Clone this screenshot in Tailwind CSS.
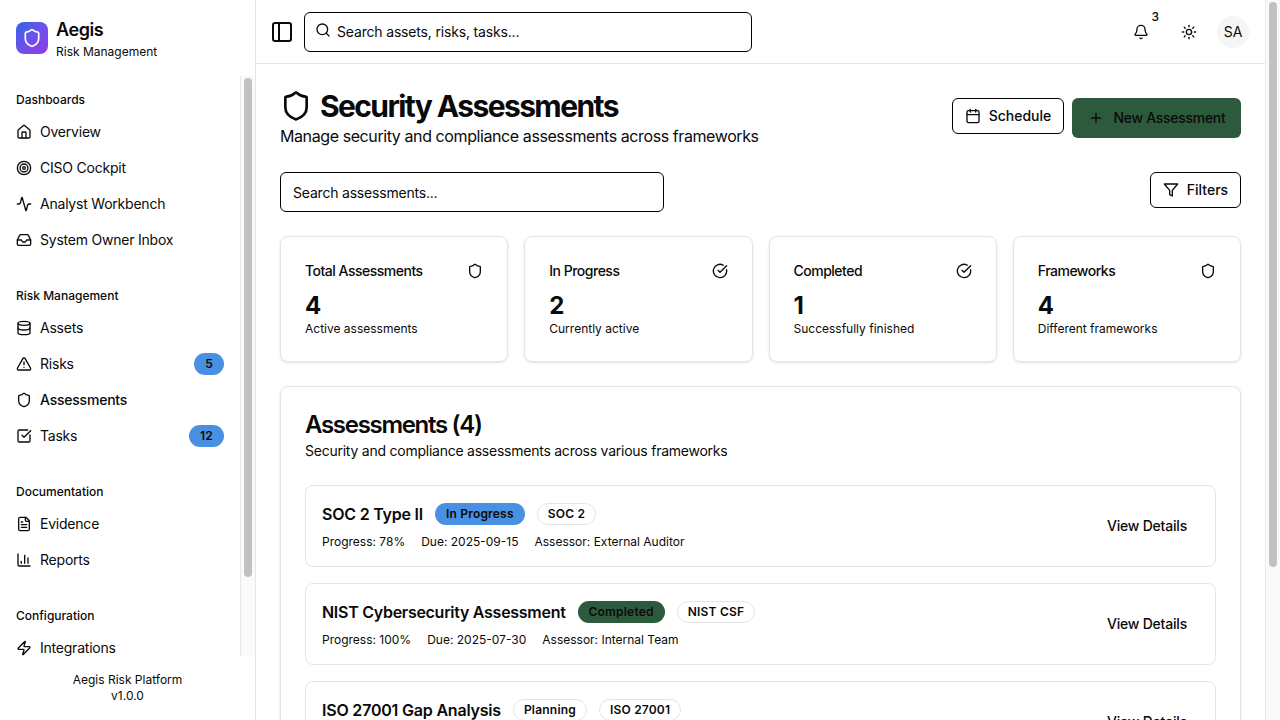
<!DOCTYPE html>
<html lang="en">
<head>
    <meta charset="UTF-8">
    <meta name="viewport" content="width=device-width, initial-scale=1.0">
    <title>Aegis - Security Assessments</title>
    <script src="https://cdn.jsdelivr.net/npm/@tailwindcss/browser@4"></script>
</head>
<body class="h-screen overflow-hidden bg-white text-[#0a0a0a] font-['Inter',sans-serif] flex">
    <!-- Sidebar -->
    <aside class="w-[256px] h-screen shrink-0 border-r border-[#e5e5e5] flex flex-col">
        <div class="h-[76px] shrink-0 pt-[22px] px-4 flex gap-2">
            <div class="w-8 h-8 rounded-lg bg-gradient-to-br from-[#2563eb] to-[#9333ea] flex items-center justify-center">
                <svg class="w-5 h-5" viewBox="0 0 24 24" fill="none" stroke="white" stroke-width="2" stroke-linecap="round" stroke-linejoin="round"><path d="M20 13c0 5-3.5 7.5-7.66 8.95a1 1 0 0 1-.67-.01C7.5 20.5 4 18 4 13V6a1 1 0 0 1 1-1c2 0 4.5-1.2 6.24-2.72a1.17 1.17 0 0 1 1.52 0C14.51 3.81 17 5 19 5a1 1 0 0 1 1 1z"/></svg>
            </div>
            <div class="-mt-[6px]">
                <div class="text-lg leading-7 font-semibold tracking-[-0.4px]">Aegis</div>
                <div class="text-xs leading-4">Risk Management</div>
            </div>
        </div>
        <div class="flex-1 min-h-0 flex">
            <nav class="flex-1 overflow-hidden px-4 pt-[8px] tracking-[-0.22px]">
                <div class="h-[30px] pt-[1px] flex items-center text-xs font-medium tracking-normal">Dashboards</div>
                <a class="h-9 flex items-center gap-2 text-sm">
                    <svg class="w-4 h-4" viewBox="0 0 24 24" fill="none" stroke="currentColor" stroke-width="2" stroke-linecap="round" stroke-linejoin="round"><path d="M15 21v-8a1 1 0 0 0-1-1h-4a1 1 0 0 0-1 1v8"/><path d="M3 10a2 2 0 0 1 .709-1.528l7-5.999a2 2 0 0 1 2.582 0l7 5.999A2 2 0 0 1 21 10v9a2 2 0 0 1-2 2H5a2 2 0 0 1-2-2z"/></svg>
                    Overview
                </a>
                <a class="h-9 flex items-center gap-2 text-sm">
                    <svg class="w-4 h-4" viewBox="0 0 24 24" fill="none" stroke="currentColor" stroke-width="2" stroke-linecap="round" stroke-linejoin="round"><circle cx="12" cy="12" r="10"/><circle cx="12" cy="12" r="6"/><circle cx="12" cy="12" r="2"/></svg>
                    CISO Cockpit
                </a>
                <a class="h-9 flex items-center gap-2 text-sm">
                    <svg class="w-4 h-4" viewBox="0 0 24 24" fill="none" stroke="currentColor" stroke-width="2" stroke-linecap="round" stroke-linejoin="round"><path d="M22 12h-2.48a2 2 0 0 0-1.93 1.46l-2.35 8.36a.25.25 0 0 1-.48 0L9.24 2.18a.25.25 0 0 0-.48 0l-2.35 8.36A2 2 0 0 1 4.49 12H2"/></svg>
                    Analyst Workbench
                </a>
                <a class="h-9 flex items-center gap-2 text-sm">
                    <svg class="w-4 h-4" viewBox="0 0 24 24" fill="none" stroke="currentColor" stroke-width="2" stroke-linecap="round" stroke-linejoin="round"><polyline points="22 12 16 12 14 15 10 15 8 12 2 12"/><path d="M5.45 5.11 2 12v6a2 2 0 0 0 2 2h16a2 2 0 0 0 2-2v-6l-3.45-6.89A2 2 0 0 0 16.76 4H7.24a2 2 0 0 0-1.79 1.11z"/></svg>
                    System Owner Inbox
                </a>

                <div class="h-[30px] pt-[1px] mt-[22px] flex items-center text-xs font-medium tracking-normal">Risk Management</div>
                <a class="h-9 flex items-center gap-2 text-sm">
                    <svg class="w-4 h-4" viewBox="0 0 24 24" fill="none" stroke="currentColor" stroke-width="2" stroke-linecap="round" stroke-linejoin="round"><ellipse cx="12" cy="5" rx="9" ry="3"/><path d="M3 5V19A9 3 0 0 0 21 19V5"/><path d="M3 12A9 3 0 0 0 21 12"/></svg>
                    Assets
                </a>
                <a class="h-9 flex items-center gap-2 text-sm">
                    <svg class="w-4 h-4" viewBox="0 0 24 24" fill="none" stroke="currentColor" stroke-width="2" stroke-linecap="round" stroke-linejoin="round"><path d="m21.73 18-8-14a2 2 0 0 0-3.48 0l-8 14A2 2 0 0 0 4 21h16a2 2 0 0 0 1.73-3"/><path d="M12 9v4"/><path d="M12 17h.01"/></svg>
                    Risks
                    <span class="ml-auto h-[22px] px-[11px] rounded-full bg-[#4a90e2] text-xs font-semibold tracking-[0.2px] flex items-center">5</span>
                </a>
                <a class="h-9 flex items-center gap-2 text-sm font-medium">
                    <svg class="w-4 h-4" viewBox="0 0 24 24" fill="none" stroke="currentColor" stroke-width="2" stroke-linecap="round" stroke-linejoin="round"><path d="M20 13c0 5-3.5 7.5-7.66 8.95a1 1 0 0 1-.67-.01C7.5 20.5 4 18 4 13V6a1 1 0 0 1 1-1c2 0 4.5-1.2 6.24-2.72a1.17 1.17 0 0 1 1.52 0C14.51 3.81 17 5 19 5a1 1 0 0 1 1 1z"/></svg>
                    Assessments
                </a>
                <a class="h-9 flex items-center gap-2 text-sm">
                    <svg class="w-4 h-4" viewBox="0 0 24 24" fill="none" stroke="currentColor" stroke-width="2" stroke-linecap="round" stroke-linejoin="round"><path d="M21 10.5V19a2 2 0 0 1-2 2H5a2 2 0 0 1-2-2V5a2 2 0 0 1 2-2h12.5"/><path d="m9 11 3 3L22 4"/></svg>
                    Tasks
                    <span class="ml-auto h-[22px] px-[11px] rounded-full bg-[#4a90e2] text-xs font-semibold tracking-[0.2px] flex items-center">12</span>
                </a>

                <div class="h-[30px] pt-[1px] mt-[22px] flex items-center text-xs font-medium tracking-normal">Documentation</div>
                <a class="h-9 flex items-center gap-2 text-sm">
                    <svg class="w-4 h-4" viewBox="0 0 24 24" fill="none" stroke="currentColor" stroke-width="2" stroke-linecap="round" stroke-linejoin="round"><path d="M15 2H6a2 2 0 0 0-2 2v16a2 2 0 0 0 2 2h12a2 2 0 0 0 2-2V7Z"/><path d="M14 2v4a2 2 0 0 0 2 2h4"/><path d="M10 9H8"/><path d="M16 13H8"/><path d="M16 17H8"/></svg>
                    Evidence
                </a>
                <a class="h-9 flex items-center gap-2 text-sm">
                    <svg class="w-4 h-4" viewBox="0 0 24 24" fill="none" stroke="currentColor" stroke-width="2" stroke-linecap="round" stroke-linejoin="round"><path d="M3 3v16a2 2 0 0 0 2 2h16"/><path d="M18 17V9"/><path d="M13 17V5"/><path d="M8 17v-3"/></svg>
                    Reports
                </a>

                <div class="h-[30px] pt-[1px] mt-[22px] flex items-center text-xs font-medium tracking-normal">Configuration</div>
                <a class="h-9 flex items-center gap-2 text-sm">
                    <svg class="w-4 h-4" viewBox="0 0 24 24" fill="none" stroke="currentColor" stroke-width="2" stroke-linecap="round" stroke-linejoin="round"><path d="M4 14a1 1 0 0 1-.78-1.63l9.9-10.2a.5.5 0 0 1 .86.46l-1.92 6.02A1 1 0 0 0 13 10h7a1 1 0 0 1 .78 1.63l-9.9 10.2a.5.5 0 0 1-.86-.46l1.92-6.02A1 1 0 0 0 11 14z"/></svg>
                    Integrations
                </a>
            </nav>
            <div class="w-[15px] shrink-0 bg-[#fafafa] border-l border-[#e8e8e8] pt-[2px] pl-[3px]">
                <div class="w-[8px] h-[499px] rounded-full bg-[#c1c1c1]"></div>
            </div>
        </div>
        <div class="h-16 shrink-0 pt-4 text-center text-xs leading-4">
            <div>Aegis Risk Platform</div>
            <div>v1.0.0</div>
        </div>
    </aside>

    <!-- Main column -->
    <div class="flex-1 min-w-0 h-screen overflow-hidden">
        <header class="h-16 border-b border-[#e5e5e5] flex items-center pl-[14px] pr-4">
            <svg class="w-6 h-6 shrink-0" viewBox="0 0 24 24" fill="none" stroke="currentColor" stroke-width="2" stroke-linecap="round" stroke-linejoin="round"><rect width="18" height="18" x="3" y="3" rx="2"/><path d="M9 3v18"/></svg>
            <div class="ml-[10px] w-[448px] h-10 rounded-md border border-black flex items-center pl-[10px] gap-[6px] text-sm tracking-[-0.17px]">
                <svg class="w-4 h-4 -mt-[3px] shrink-0" viewBox="0 0 24 24" fill="none" stroke="currentColor" stroke-width="2" stroke-linecap="round" stroke-linejoin="round"><circle cx="11" cy="11" r="8"/><path d="m21 21-4.3-4.3"/></svg>
                <span>Search assets, risks, tasks...</span>
            </div>
            <div class="ml-auto relative w-10 h-10 flex items-center justify-center">
                <svg class="w-4 h-4" viewBox="0 0 24 24" fill="none" stroke="currentColor" stroke-width="2" stroke-linecap="round" stroke-linejoin="round"><path d="M10.268 21a2 2 0 0 0 3.464 0"/><path d="M3.262 15.326A1 1 0 0 0 4 17h16a1 1 0 0 0 .74-1.673C19.41 13.956 18 12.499 18 8A6 6 0 0 0 6 8c0 4.499-1.411 5.956-2.738 7.326"/></svg>
                <span class="absolute top-[-3px] right-[2px] text-xs font-medium">3</span>
            </div>
            <div class="ml-2 w-10 h-10 flex items-center justify-center">
                <svg class="w-4 h-4" viewBox="0 0 24 24" fill="none" stroke="currentColor" stroke-width="2" stroke-linecap="round" stroke-linejoin="round"><circle cx="12" cy="12" r="4"/><path d="M12 2v2"/><path d="M12 20v2"/><path d="m4.93 4.93 1.41 1.41"/><path d="m17.66 17.66 1.41 1.41"/><path d="M2 12h2"/><path d="M20 12h2"/><path d="m6.34 17.66-1.41 1.41"/><path d="m19.07 4.93-1.41 1.41"/></svg>
            </div>
            <div class="ml-2 w-8 h-8 rounded-full bg-[#f5f5f5] flex items-center justify-center text-sm">SA</div>
        </header>

        <main class="p-6">
            <div class="flex justify-between">
                <div>
                    <div class="flex items-center gap-2 h-9">
                        <svg class="w-8 h-8" viewBox="0 0 24 24" fill="none" stroke="currentColor" stroke-width="2" stroke-linecap="round" stroke-linejoin="round"><path d="M20 13c0 5-3.5 7.5-7.66 8.95a1 1 0 0 1-.67-.01C7.5 20.5 4 18 4 13V6a1 1 0 0 1 1-1c2 0 4.5-1.2 6.24-2.72a1.17 1.17 0 0 1 1.52 0C14.51 3.81 17 5 19 5a1 1 0 0 1 1 1z"/></svg>
                        <h1 class="text-3xl font-bold tracking-[-1.6px]">Security Assessments</h1>
                    </div>
                    <p class="text-base leading-6 tracking-[-0.41px]">Manage security and compliance assessments across frameworks</p>
                </div>
                <div class="flex items-start gap-2 pt-[10px]">
                    <button class="h-9 w-[112px] rounded-md border border-black flex items-center justify-center gap-2 text-sm font-medium">
                        <svg class="w-4 h-4" viewBox="0 0 24 24" fill="none" stroke="currentColor" stroke-width="2" stroke-linecap="round" stroke-linejoin="round"><path d="M8 2v4"/><path d="M16 2v4"/><rect width="18" height="18" x="3" y="4" rx="2"/><path d="M3 10h18"/></svg>
                        Schedule
                    </button>
                    <button class="h-10 w-[169px] rounded-md bg-[#2d5a3d] flex items-center justify-center gap-2 text-sm font-medium tracking-[-0.3px]">
                        <svg class="w-4 h-4 mr-[2px]" viewBox="0 0 24 24" fill="none" stroke="currentColor" stroke-width="2" stroke-linecap="round" stroke-linejoin="round"><path d="M5 12h14"/><path d="M12 5v14"/></svg>
                        New Assessment
                    </button>
                </div>
            </div>

            <div class="mt-[24px] flex justify-between items-start">
                <div class="w-[384px] h-10 rounded-md border border-black flex items-center px-3 pt-[1px] text-sm tracking-[-0.2px]">Search assessments...</div>
                <button class="h-9 w-[91px] rounded-md border border-black flex items-center justify-center gap-2 text-sm font-medium">
                    <svg class="w-4 h-4" viewBox="0 0 24 24" fill="none" stroke="currentColor" stroke-width="2" stroke-linecap="round" stroke-linejoin="round"><polygon points="22 3 2 3 10 12.46 10 19 14 21 14 12.46 22 3"/></svg>
                    Filters
                </button>
            </div>

            <div class="mt-6 grid grid-cols-4 gap-4">
                <div class="h-[126px] rounded-lg border border-[#e5e5e5] shadow-sm px-6 pt-6">
                    <div class="flex items-center justify-between h-5 text-sm font-medium tracking-[-0.5px]">
                        Total Assessments
                        <svg class="w-4 h-4" viewBox="0 0 24 24" fill="none" stroke="currentColor" stroke-width="2" stroke-linecap="round" stroke-linejoin="round"><path d="M20 13c0 5-3.5 7.5-7.66 8.95a1 1 0 0 1-.67-.01C7.5 20.5 4 18 4 13V6a1 1 0 0 1 1-1c2 0 4.5-1.2 6.24-2.72a1.17 1.17 0 0 1 1.52 0C14.51 3.81 17 5 19 5a1 1 0 0 1 1 1z"/></svg>
                    </div>
                    <div class="mt-[9px] -mb-[1px] text-2xl leading-8 font-bold">4</div>
                    <div class="text-xs leading-4">Active assessments</div>
                </div>
                <div class="h-[126px] rounded-lg border border-[#e5e5e5] shadow-sm px-6 pt-6">
                    <div class="flex items-center justify-between h-5 text-sm font-medium tracking-[-0.5px]">
                        In Progress
                        <svg class="w-4 h-4" viewBox="0 0 24 24" fill="none" stroke="currentColor" stroke-width="2" stroke-linecap="round" stroke-linejoin="round"><path d="M21.801 10A10 10 0 1 1 17 3.335"/><path d="m9 11 3 3L22 4"/></svg>
                    </div>
                    <div class="mt-[9px] -mb-[1px] text-2xl leading-8 font-bold">2</div>
                    <div class="text-xs leading-4">Currently active</div>
                </div>
                <div class="h-[126px] rounded-lg border border-[#e5e5e5] shadow-sm px-6 pt-6">
                    <div class="flex items-center justify-between h-5 text-sm font-medium tracking-[-0.5px]">
                        Completed
                        <svg class="w-4 h-4" viewBox="0 0 24 24" fill="none" stroke="currentColor" stroke-width="2" stroke-linecap="round" stroke-linejoin="round"><path d="M21.801 10A10 10 0 1 1 17 3.335"/><path d="m9 11 3 3L22 4"/></svg>
                    </div>
                    <div class="mt-[9px] -mb-[1px] text-2xl leading-8 font-bold">1</div>
                    <div class="text-xs leading-4">Successfully finished</div>
                </div>
                <div class="h-[126px] rounded-lg border border-[#e5e5e5] shadow-sm px-6 pt-6">
                    <div class="flex items-center justify-between h-5 text-sm font-medium tracking-[-0.5px]">
                        Frameworks
                        <svg class="w-4 h-4" viewBox="0 0 24 24" fill="none" stroke="currentColor" stroke-width="2" stroke-linecap="round" stroke-linejoin="round"><path d="M20 13c0 5-3.5 7.5-7.66 8.95a1 1 0 0 1-.67-.01C7.5 20.5 4 18 4 13V6a1 1 0 0 1 1-1c2 0 4.5-1.2 6.24-2.72a1.17 1.17 0 0 1 1.52 0C14.51 3.81 17 5 19 5a1 1 0 0 1 1 1z"/></svg>
                    </div>
                    <div class="mt-[9px] -mb-[1px] text-2xl leading-8 font-bold">4</div>
                    <div class="text-xs leading-4">Different frameworks</div>
                </div>
            </div>

            <section class="mt-6 rounded-lg border border-[#e5e5e5] shadow-sm px-6 pt-6 pb-6">
                <h2 class="text-2xl leading-7 font-semibold tracking-[-1.3px]">Assessments (4)</h2>
                <p class="text-sm leading-5 mt-[2px] tracking-[-0.24px]">Security and compliance assessments across various frameworks</p>
                <div class="mt-6 flex flex-col gap-4">
                    <div class="h-[82px] rounded-lg border border-[#e5e5e5] px-4 flex items-center justify-between">
                        <div>
                            <div class="flex items-center gap-3">
                                <span class="font-semibold tracking-[-0.22px]">SOC 2 Type II</span>
                                <span class="h-[22px] px-[11px] rounded-full bg-[#4a90e2] text-xs font-semibold tracking-[0.2px] flex items-center">In Progress</span>
                                <span class="h-[22px] px-[10px] rounded-full border border-[#e5e5e5] text-xs font-semibold tracking-[0.2px] flex items-center">SOC 2</span>
                            </div>
                            <div class="mt-[8px] flex gap-4 text-xs leading-4"><span>Progress: 78%</span><span>Due: 2025-09-15</span><span>Assessor: External Auditor</span></div>
                        </div>
                        <button class="px-3 text-sm font-medium tracking-[-0.2px]">View Details</button>
                    </div>
                    <div class="h-[82px] rounded-lg border border-[#e5e5e5] px-4 flex items-center justify-between">
                        <div>
                            <div class="flex items-center gap-3">
                                <span class="font-semibold tracking-[-0.28px]">NIST Cybersecurity Assessment</span>
                                <span class="h-[22px] px-[11px] rounded-full bg-[#2d5a3d] text-xs font-semibold tracking-[0.2px] flex items-center">Completed</span>
                                <span class="h-[22px] px-[10px] rounded-full border border-[#e5e5e5] text-xs font-semibold tracking-[0.2px] flex items-center">NIST CSF</span>
                            </div>
                            <div class="mt-[8px] flex gap-4 text-xs leading-4"><span>Progress: 100%</span><span>Due: 2025-07-30</span><span>Assessor: Internal Team</span></div>
                        </div>
                        <button class="px-3 text-sm font-medium tracking-[-0.2px]">View Details</button>
                    </div>
                    <div class="h-[82px] rounded-lg border border-[#e5e5e5] px-4 flex items-center justify-between">
                        <div>
                            <div class="flex items-center gap-3">
                                <span class="font-semibold tracking-[-0.2px]">ISO 27001 Gap Analysis</span>
                                <span class="h-[22px] px-[10px] rounded-full border border-[#e5e5e5] text-xs font-semibold tracking-[0.2px] flex items-center">Planning</span>
                                <span class="h-[22px] px-[10px] rounded-full border border-[#e5e5e5] text-xs font-semibold tracking-[0.2px] flex items-center">ISO 27001</span>
                            </div>
                            <div class="mt-[8px] flex gap-4 text-xs leading-4"><span>Progress: 0%</span></div>
                        </div>
                        <button class="px-3 text-sm font-medium tracking-[-0.2px]">View Details</button>
                    </div>
                </div>
            </section>
        </main>
    </div>

    <!-- Page scrollbar -->
    <div class="w-[15px] h-screen shrink-0 bg-[#fafafa] border-l border-[#e8e8e8] pt-[2px] pl-[3px]">
        <div class="w-[8px] h-[565px] rounded-full bg-[#c1c1c1]"></div>
    </div>
</body>
</html>
